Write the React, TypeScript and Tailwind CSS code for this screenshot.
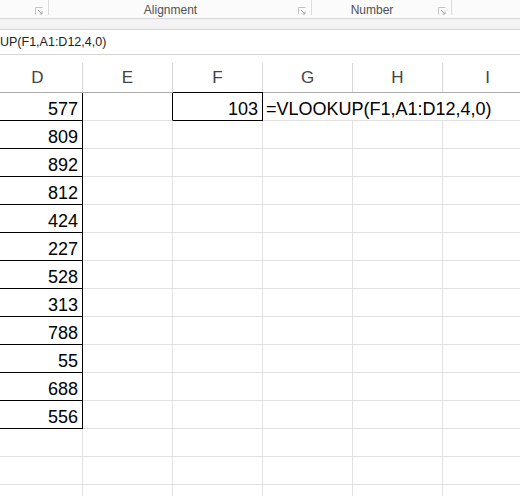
import React from 'react';

const values = [577, 809, 892, 812, 424, 227, 528, 313, 788, 55, 688, 556];
const cols = ['E', 'F', 'G', 'H', 'I'];

const Launcher: React.FC = () => (
  <svg className="w-[8px] h-[8px] mr-[5px] mt-[6px] shrink-0" viewBox="0 0 8 8" fill="none">
    <path d="M0.5 7.5V0.5H7.5" stroke="#c4c4c4" strokeWidth={1} />
    <path d="M3 3L7 7M7 4.5V7H4.5" stroke="#a8a8a8" strokeWidth={1} />
  </svg>
);

const App: React.FC = () => {
  const rows = Array.from({ length: 15 }, (_, i) => i);

  return (
    <div className="w-[520px] h-[496px] overflow-hidden bg-white font-['Liberation_Sans',Arial,sans-serif]">
      {/* Ribbon group labels */}
      <div className="h-[19px] flex bg-[#fbfbfb] border-b border-[#d6d6d6]">
        <div className="w-[49px] h-[15px] flex items-center justify-end border-r border-[#dcdcdc] shrink-0">
          <Launcher />
        </div>
        <div className="w-[263px] h-[15px] flex items-center border-r border-[#dcdcdc] shrink-0">
          <span className="flex-1 text-center pr-[6px] text-[12px] leading-[15px] pt-[5px] text-[#505050]">Alignment</span>
          <Launcher />
        </div>
        <div className="w-[140px] h-[15px] flex items-center border-r border-[#dcdcdc] shrink-0">
          <span className="flex-1 text-center pr-[6px] text-[12px] leading-[15px] pt-[5px] text-[#505050]">Number</span>
          <Launcher />
        </div>
        <div className="flex-1" />
      </div>
      <div className="h-[10px] bg-[#f3f3f3]" />

      {/* Formula bar */}
      <div className="h-[26px] flex items-center border-y border-[#d4d4d4] overflow-hidden whitespace-nowrap">
        <span className="text-[12.5px] text-[#222]">UP(F1,A1:D12,4,0)</span>
      </div>
      <div className="h-[8px]" />

      {/* Column headers */}
      <div className="h-[30px] flex border-b border-[#ababab] text-[17px] text-[#444]">
        <div className="w-[83px] shrink-0 flex items-center justify-center pr-[7px] border-r border-[#d8d8d8]">D</div>
        {cols.map((c) => (
          <div key={c} className="w-[90px] shrink-0 flex items-center justify-center border-r border-[#d8d8d8]">
            {c}
          </div>
        ))}
      </div>

      {/* Grid */}
      {rows.map((r) => {
        const inRange = r < values.length;
        const first = r === 0;
        return (
          <div key={r} className="h-[28px] flex text-[18px] leading-[20px] text-black">
            <div
              className={`w-[83px] shrink-0 pt-[6px] pr-[4px] text-right border-r border-b ${
                inRange ? 'border-black' : 'border-[#e1e1e1]'
              }`}
            >
              {inRange ? values[r] : ''}
            </div>
            <div className={`w-[90px] shrink-0 border-r border-b border-[#e1e1e1] ${first ? 'border-r-black' : ''}`} />
            <div
              className={`w-[90px] shrink-0 pt-[6px] pr-[4px] text-right border-r border-b ${
                first ? 'border-black shadow-[0_-1px_0_#000]' : 'border-[#e1e1e1]'
              }`}
            >
              {first ? 103 : ''}
            </div>
            <div className={`w-[90px] shrink-0 border-b border-[#e1e1e1] ${first ? 'relative z-10 overflow-visible whitespace-nowrap pt-[6px] pl-[3px]' : 'border-r'}`}>
              {first ? '=VLOOKUP(F1,A1:D12,4,0)' : ''}
            </div>
            <div className={`w-[90px] shrink-0 border-b border-[#e1e1e1] ${first ? '' : 'border-r'}`} />
            <div className="w-[90px] shrink-0 border-r border-b border-[#e1e1e1]" />
          </div>
        );
      })}
    </div>
  );
};

export default App;
